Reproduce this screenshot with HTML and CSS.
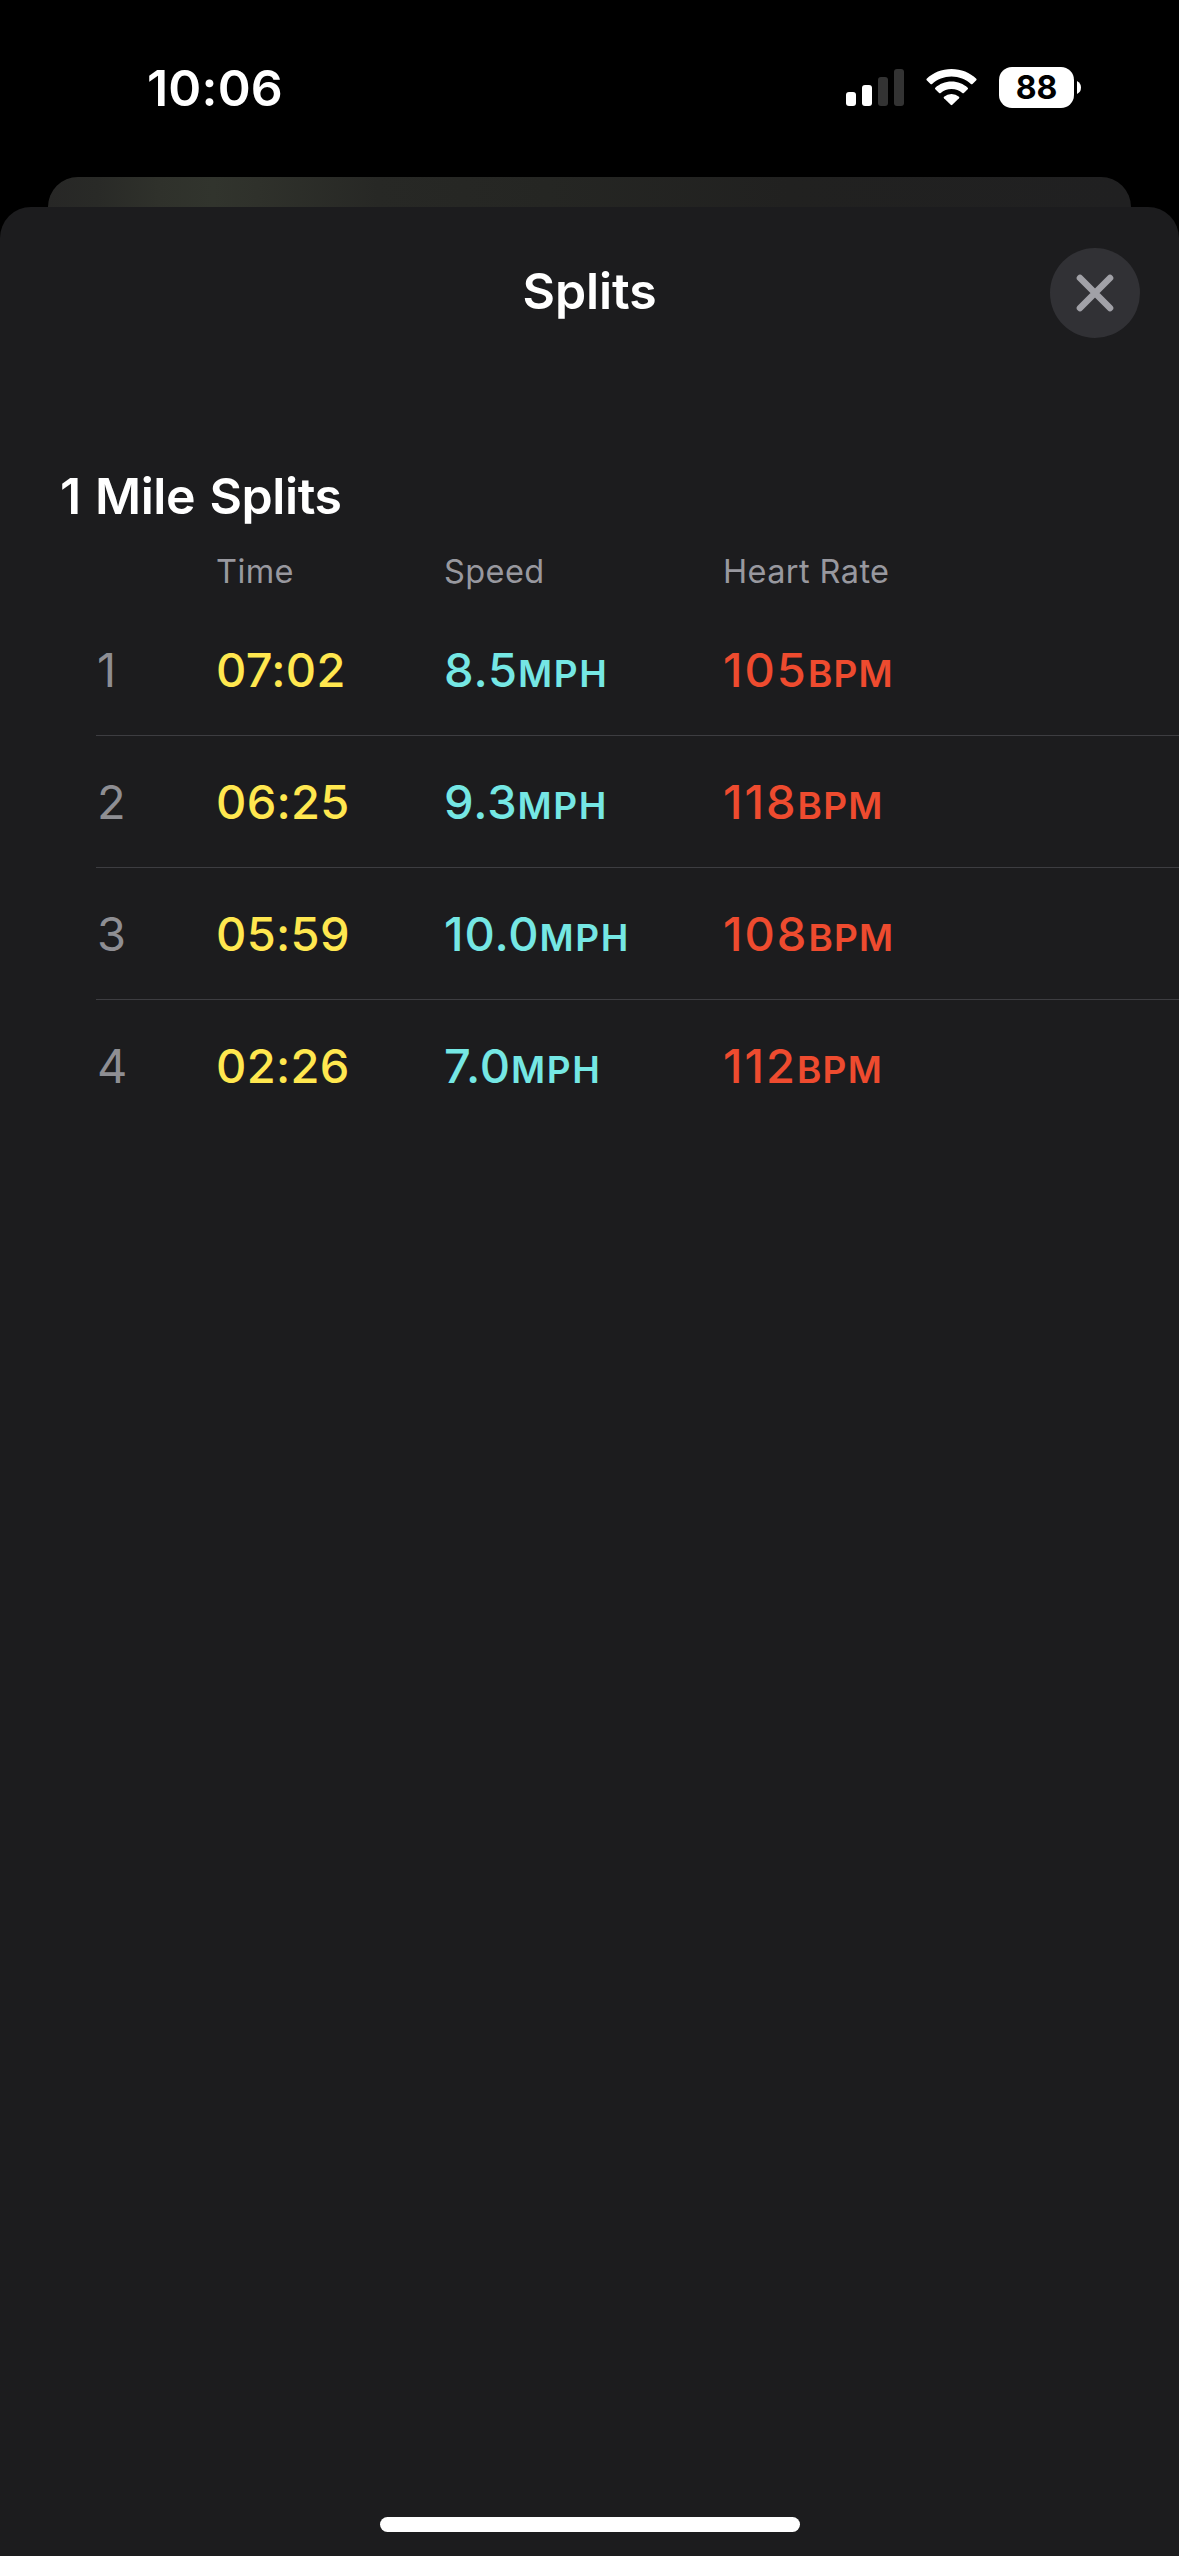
FILE: index.html
```html
<!DOCTYPE html>
<html lang="en">
<head>
<meta charset="utf-8">
<title>Splits</title>
<link rel="stylesheet" href="styles.css">
</head>
<body>
<div class="screen">
  <header class="status">
    <span class="clock">10:06</span>
    <div class="indicators">
      <svg class="signal" width="58" height="38" viewBox="0 0 58 38">
        <rect x="0" y="23" width="10" height="14" rx="3" fill="#fff"/>
        <rect x="16" y="16" width="10" height="21" rx="3" fill="#fff"/>
        <rect x="32" y="8" width="10" height="29" rx="3" fill="#333"/>
        <rect x="48" y="0" width="10" height="37" rx="3" fill="#333"/>
      </svg>
      <svg class="wifi" width="51" height="37" viewBox="0 0 51 37" fill="#fff">
        <path d="M25.5 0C35.2 0 44 3.700 50.300 9.700Q51 10.500 50.300 11.300L46.500 15Q45.700 15.700 44.900 15C39.800 10.300 33 7.500 25.500 7.500S11.200 10.300 6.100 15Q5.300 15.700 4.500 15L.7 11.300Q0 10.500 .7 9.700C7 3.700 15.800 0 25.500 0Z"/>
        <path d="M25.500 12.500C31.800 12.500 37.500 14.900 41.700 18.700Q42.500 19.500 41.700 20.300L37.900 24Q37.100 24.700 36.300 24C33.400 21.500 29.700 20 25.500 20S17.600 21.500 14.700 24Q13.900 24.700 13.100 24L9.300 20.300Q8.500 19.500 9.300 18.700C13.500 14.900 19.200 12.500 25.500 12.500Z"/>
        <path d="M25.500 25Q29.800 25 33 27.700Q33.800 28.500 33 29.300L26.300 35.800Q25.500 36.500 24.700 35.800L18 29.300Q17.200 28.500 18 27.700Q21.200 25 25.500 25Z"/>
      </svg>
      <div class="battery">
        <span class="level">88</span>
        <svg width="4" height="13" viewBox="0 0 4 13"><path d="M0 0Q4 2 4 6.500T0 13Z" fill="#fff"/></svg>
      </div>
    </div>
  </header>
  <div class="back-card"></div>
  <main class="sheet">
    <div class="bar">
      <h1 class="title">Splits</h1>
      <button class="close" aria-label="Close">
        <svg width="38" height="38" viewBox="0 0 38 38"><path d="M4 4 34 34M34 4 4 34" stroke="#a1a1a7" stroke-width="6.600" stroke-linecap="round"/></svg>
      </button>
    </div>
    <h2 class="heading">1 Mile Splits</h2>
    <div class="table">
      <div class="grid head"><span></span><span>Time</span><span>Speed</span><span>Heart Rate</span></div>
      <div class="grid row"><span class="num">1</span><span class="time">07:02</span><span class="speed">8.5<small>MPH</small></span><span class="heart">105<small>BPM</small></span></div>
      <div class="grid row"><span class="num">2</span><span class="time">06:25</span><span class="speed">9.3<small>MPH</small></span><span class="heart">118<small>BPM</small></span></div>
      <div class="grid row"><span class="num">3</span><span class="time">05:59</span><span class="speed">10.0<small>MPH</small></span><span class="heart">108<small>BPM</small></span></div>
      <div class="grid row"><span class="num">4</span><span class="time">02:26</span><span class="speed">7.0<small>MPH</small></span><span class="heart">112<small>BPM</small></span></div>
    </div>
    <div class="home"></div>
  </main>
</div>
</body>
</html>
```

FILE: styles.css
```css
* { box-sizing: border-box; }
body { margin: 0; background: #000; font-family: Inter, "Liberation Sans", sans-serif; color: #fff; }
.screen { width: 1179px; height: 2556px; display: flex; flex-direction: column; overflow: hidden; }

.status { height: 177px; flex: none; display: flex; justify-content: space-between; align-items: flex-start; padding: 58px 98px 0 147px; }
.clock { font-size: 50px; line-height: 60px; font-weight: 600; letter-spacing: 0.2px; }
.indicators { display: flex; align-items: flex-start; padding-top: 9px; }
.signal { margin-top: 2px; }
.wifi { margin: 2px 22px 0 22px; }
.battery { display: flex; align-items: center; gap: 3px; }
.level { width: 75px; height: 41px; border-radius: 13px; background: #fff; color: #000; font-size: 32px; line-height: 42px; font-weight: 700; text-align: center; }

.back-card { height: 70px; flex: none; margin: 0 48px -40px; border-radius: 30px 30px 0 0; background: linear-gradient(90deg, #272726 0, #292a27 50px, #2f312b 110px, #31342d 165px, #2f312b 210px, #272825 330px, #252623 500px, #212120 740px, #202021 1083px); }

.sheet { flex: 1; border-radius: 31px 31px 0 0; background: #1c1c1e; display: flex; flex-direction: column; }
.bar { height: 171px; display: grid; grid-template-columns: 1fr auto 1fr; padding: 41px 39px 0; align-items: start; }
.title { margin: 13px 0 0; grid-column: 2; font-size: 50px; line-height: 60px; font-weight: 600; letter-spacing: -0.1px; }
.close { grid-column: 3; justify-self: end; width: 90px; height: 90px; border: 0; border-radius: 50%; padding: 0; background: #313135; display: grid; place-items: center; }
.heading { margin: 88px 0 0 60px; font-size: 50px; line-height: 60px; font-weight: 600; letter-spacing: -0.4px; word-spacing: 2px; }

.grid { display: grid; grid-template-columns: 120px 228px 279px 1fr; margin-left: 96px; }
.head { height: 78px; padding-top: 26px; font-size: 32.5px; line-height: 40px; color: #98989f; letter-spacing: 0.4px; }
.row { height: 132px; align-items: baseline; padding-top: 36px; font-size: 47px; line-height: 60px; border-bottom: 1px solid #3d3d41; }
.row:last-child { border-bottom-color: transparent; }
.num { color: #8e8e93; padding-left: 1px; }
.time { color: #ffe74f; font-weight: 500; letter-spacing: 0.3px; }
.speed { color: #75e7e4; font-weight: 500; letter-spacing: 0.9px; }
.heart { color: #ee4b2f; font-weight: 500; letter-spacing: 2px; }
.row small { font-size: 37px; font-weight: 600; letter-spacing: 1.6px; line-height: 1; }
.heart small { letter-spacing: 1.2px; }

.home { width: 420px; height: 15px; border-radius: 8px; background: #fff; margin: auto auto 24px; }
```
